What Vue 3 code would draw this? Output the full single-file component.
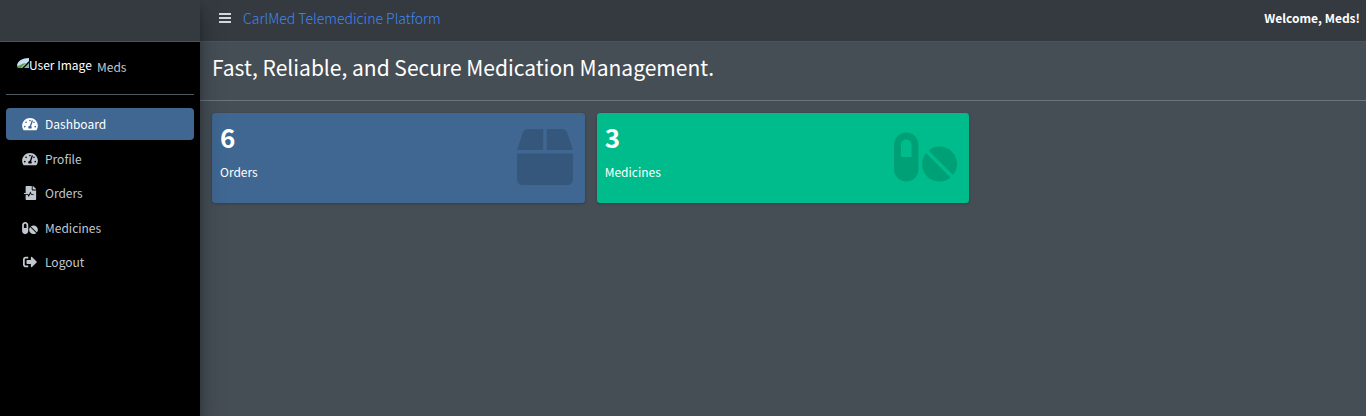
<script setup>
const gauge = 'M288 32C128.94 32 0 160.94 0 320c0 52.8 14.25 102.26 39.06 144.8 5.61 9.62 16.3 15.2 27.44 15.2h443c11.14 0 21.83-5.58 27.44-15.2C561.75 422.26 576 372.8 576 320c0-159.06-128.94-288-288-288zm0 64c14.71 0 26.58 10.13 30.32 23.65-1.11 2.26-2.64 4.23-3.45 6.67l-9.22 27.67c-5.13 3.49-10.97 6.01-17.64 6.01-17.67 0-32-14.33-32-32S270.33 96 288 96zM96 384c-17.67 0-32-14.33-32-32s14.33-32 32-32 32 14.33 32 32-14.33 32-32 32zm48-160c-17.67 0-32-14.33-32-32s14.33-32 32-32 32 14.33 32 32-14.33 32-32 32zm246.77-72.41l-61.33 184C343.13 347.33 352 364.54 352 384c0 11.72-3.38 22.55-8.88 32H232.88c-5.5-9.45-8.88-20.28-8.88-32 0-33.94 26.5-61.43 59.9-63.59l61.34-184.01c4.17-12.56 17.73-19.45 30.36-15.17 12.57 4.19 19.35 17.79 15.17 30.36zm14.66 57.2l15.52-46.55c3.47-1.29 7.13-2.23 11.05-2.23 17.67 0 32 14.33 32 32s-14.33 32-32 32c-11.38-.01-20.89-6.28-26.57-15.22zM480 384c-17.67 0-32-14.33-32-32s14.33-32 32-32 32 14.33 32 32-14.33 32-32 32z'
const fileMedical = 'M288 136V0H88C74.7 0 64 10.7 64 24v232H8c-4.4 0-8 3.6-8 8v16c0 4.4 3.6 8 8 8h140.9c3 0 5.8 1.7 7.2 4.4l19.9 39.8 56.8-113.7c2.9-5.9 11.4-5.9 14.3 0l34.7 69.5H352c8.8 0 16 7.2 16 16s-7.2 16-16 16h-89.9L240 275.8l-56.8 113.7c-2.9 5.9-11.4 5.9-14.3 0L134.1 320H64v168c0 13.3 10.7 24 24 24h336c13.3 0 24-10.7 24-24V160H312c-13.2 0-24-10.8-24-24zm153-31L343.1 7c-4.5-4.5-10.6-7-17-7H320v128h128v-6.1c0-6.3-2.5-12.4-7-16.9z'
const pills = 'M112 32C50.1 32 0 82.1 0 144v224c0 61.9 50.1 112 112 112s112-50.1 112-112V144c0-61.9-50.1-112-112-112zm48 224H64V144c0-26.5 21.5-48 48-48s48 21.5 48 48v112zm139.7-29.7c-3.5-3.5-9.4-3.1-12.3.8-45.3 62.5-40.4 150.1 15.9 206.4 56.3 56.3 143.9 61.2 206.4 15.9 4-2.9 4.3-8.8.8-12.3L299.7 226.3zm229.8-19c-56.3-56.3-143.9-61.2-206.4-15.9-4 2.9-4.3 8.8-.8 12.3l210.8 210.8c3.5 3.5 9.4 3.1 12.3-.8 45.3-62.6 40.5-150.1-15.9-206.4z'
const signOut = 'M497 273L329 441c-15 15-41 4.5-41-17v-96H152c-13.3 0-24-10.7-24-24v-96c0-13.3 10.7-24 24-24h136V88c0-21.4 25.9-32 41-17l168 168c9.3 9.4 9.3 24.6 0 34zM192 436v-40c0-6.6-5.4-12-12-12H96c-17.7 0-32-14.3-32-32V160c0-17.7 14.3-32 32-32h84c6.6 0 12-5.4 12-12V76c0-6.6-5.4-12-12-12H96c-53 0-96 43-96 96v192c0 53 43 96 96 96h84c6.6 0 12-5.4 12-12z'
const box = 'M509.5 184.6L458.9 32.8C452.4 13.2 434.1 0 413.4 0H272v192h238.7c-.4-2.5-.4-5-1.2-7.4zM240 0H98.6c-20.7 0-39 13.2-45.5 32.8L2.5 184.6c-.8 2.4-.8 4.9-1.2 7.4H240V0zM0 224v240c0 26.5 21.5 48 48 48h416c26.5 0 48-21.5 48-48V224H0z'

const menu = [
  { label: 'Dashboard', icon: gauge, w: 576, active: true },
  { label: 'Profile', icon: gauge, w: 576 },
  { label: 'Orders', icon: fileMedical, w: 448 },
  { label: 'Medicines', icon: pills, w: 576 },
  { label: 'Logout', icon: signOut, w: 512 },
]
const cards = [
  { value: 6, label: 'Orders', icon: box, w: 512, tone: 'blue' },
  { value: 3, label: 'Medicines', icon: pills, w: 576, tone: 'green' },
]
</script>

<template>
  <div class="app">
    <aside class="sidebar">
      <div class="brand"></div>
      <div class="side-body">
        <div class="user">
          <span class="avatar">
            <svg class="broken" viewBox="0 0 12 18" aria-hidden="true">
              <path d="M0 9C1 5 5 2 12 2v3L5 12H1z" fill="#c9dff2" />
              <path d="M0 10C3 10 5 7 9 7L4 12H1z" fill="#5aa44b" />
              <path d="M7 12l5-5v5z" fill="#8fae93" />
            </svg>
            <span>User Image</span>
          </span>
          <a href="#" class="user-name">Meds</a>
        </div>
        <nav class="menu">
          <a v-for="m in menu" :key="m.label" href="#" class="item" :class="{ active: m.active }">
            <svg class="item-icon" :viewBox="`0 0 ${m.w} 512`" aria-hidden="true"><path :d="m.icon" /></svg>
            <span>{{ m.label }}</span>
          </a>
        </nav>
      </div>
    </aside>
    <div class="main">
      <header class="topbar">
        <button class="toggle" type="button" aria-label="Toggle menu">
          <svg viewBox="0 0 12 12" aria-hidden="true"><path d="M0 1h12v2H0zM0 5h12v2H0zM0 9h12v2H0z" /></svg>
        </button>
        <a href="#" class="title">CarlMed Telemedicine Platform</a>
        <strong class="welcome">Welcome, Meds!</strong>
      </header>
      <h1>Fast, Reliable, and Secure Medication Management.</h1>
      <section class="cards">
        <article v-for="c in cards" :key="c.label" class="card" :class="c.tone">
          <div>
            <h3>{{ c.value }}</h3>
            <p>{{ c.label }}</p>
          </div>
          <svg class="card-icon" :viewBox="`0 0 ${c.w} 512`" aria-hidden="true"><path :d="c.icon" /></svg>
        </article>
      </section>
    </div>
  </div>
</template>

<style>
body { margin: 0; background: #454d55; }
</style>

<style scoped>
* { box-sizing: border-box; }
.app {
  display: flex;
  min-height: 100vh;
  background: #454d55;
  color: #fff;
  font: 12px/18px "Noto Sans CJK SC", "Noto Sans", sans-serif;
}
a { text-decoration: none; color: inherit; }
.sidebar {
  flex: 0 0 200px;
  background: #000;
  box-shadow: 0 12px 24px rgba(0, 0, 0, .25), 0 8px 8px rgba(0, 0, 0, .22);
  z-index: 1;
}
.brand { height: 42px; background: #343a40; border-bottom: 1px solid #4b545c; }
.side-body { padding: 0 6px; }
.user {
  display: flex;
  align-items: center;
  gap: 8px;
  height: 53px;
  padding: 0 0 2px 11px;
  border-bottom: 1px solid #4f5962;
  color: #c2c7d0;
}
.avatar {
  display: flex;
  width: 72px;
  height: 18px;
  margin-bottom: 4px;
  white-space: nowrap;
  color: #fff;
}
.broken { flex: none; width: 12px; height: 18px; }
.menu {
  display: flex;
  flex-direction: column;
  justify-content: space-between;
  height: 183px;
  padding-top: 13px;
}
.item {
  display: flex;
  align-items: center;
  gap: 7px;
  padding: 7px 16px;
  border-radius: 4px;
  color: #c2c7d0;
}
.item.active { background: #3f6791; color: #fff; }
.item-icon { width: 16px; height: 14px; fill: currentColor; }
.main { flex: 1; min-width: 0; }
.topbar {
  display: flex;
  align-items: center;
  height: 42px;
  padding: 0 6px 5px 19px;
  background: #343a40;
  border-bottom: 1px solid #4b545c;
}
.toggle { padding: 0; border: 0; background: none; line-height: 0; }
.toggle svg { width: 12px; height: 12px; fill: #d3d7da; }
.title { margin-left: 12px; font-size: 14px; font-weight: 300; color: #3f86f5; }
.welcome { margin-left: auto; font-weight: 700; }
h1 {
  margin: 0;
  padding: 10px 12px;
  height: 59px;
  border-bottom: 1px solid #6c757d;
  font-size: 21px;
  line-height: 30px;
  font-weight: 400;
}
.cards {
  display: grid;
  grid-template-columns: repeat(3, 1fr);
  gap: 12px;
  padding: 12px;
}
.card {
  display: flex;
  justify-content: space-between;
  height: 90px;
  padding: 8px;
  border-radius: 3px;
  box-shadow: 0 0 1px rgba(0, 0, 0, .13), 0 1px 3px rgba(0, 0, 0, .2);
}
.blue { background: #3f6791; }
.green { background: #00bc8c; }
h3 { margin: 0 0 10px; font-size: 26px; line-height: 32px; font-weight: 700; }
p { margin: 0; }
.card-icon { height: 56px; margin: 8px 4px 0 0; fill: rgba(0, 0, 0, .15); }
</style>
